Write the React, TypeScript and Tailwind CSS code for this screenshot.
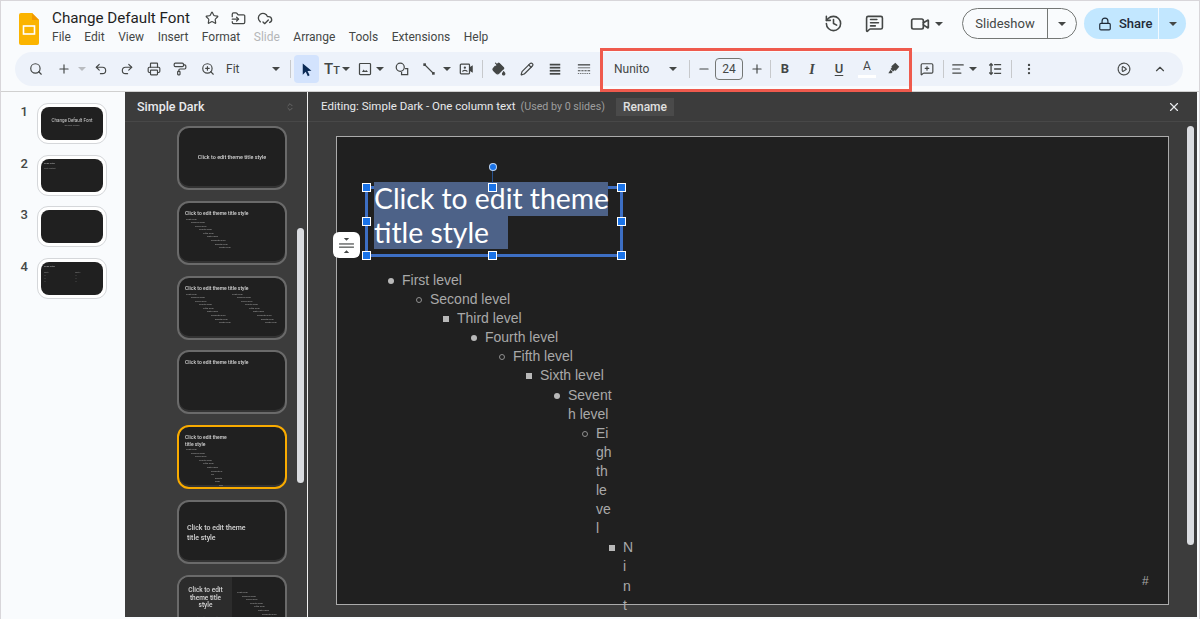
import React from 'react';
import {
  Search, Plus, Undo2, Redo2, Printer, PaintRoller, ZoomIn, PaintBucket, Pencil,
  Star, FolderInput, CloudCheck, History, MessageSquareText, Video, Lock, X, Minus,
  EllipsisVertical, ChevronUp, AlignLeft, MessageSquarePlus, CirclePlay, ChevronsUpDown,
} from 'lucide-react';

const sans = 'font-["Roboto",sans-serif]';

function Caret({ className = '' }: { className?: string }) {
  return <span className={`block w-0 h-0 border-x-[4px] border-x-transparent border-t-[4px] border-t-[#444746] ${className}`} />;
}

function Divider({ className = '' }: { className?: string }) {
  return <span className={`block w-px h-[18px] bg-[#c7c9cc] ${className}`} />;
}

const menus = ['File', 'Edit', 'View', 'Insert', 'Format', 'Slide', 'Arrange', 'Tools', 'Extensions', 'Help'];

function Header() {
  return (
    <div className="relative h-[90px] shrink-0 bg-[#f9fbfd]">
      <div className="flex items-start h-[47px]">
        <svg viewBox="0 0 20 32" className="w-[20px] h-[32px] ml-[18px] mt-[12px] shrink-0">
          <path d="M2 0h11l7 7v23a2 2 0 0 1-2 2H2a2 2 0 0 1-2-2V2a2 2 0 0 1 2-2z" fill="#fbb400" />
          <path d="M13 0l7 7h-7z" fill="#f29900" />
          <rect x="4.5" y="13" width="11" height="8" fill="none" stroke="#fff" strokeWidth="1.6" />
        </svg>
        <div className="ml-[13px] mt-[7px]">
          <div className="flex items-center h-[20px]">
            <span className="text-[15.200px] leading-[20px] text-[#1f1f1f] w-[149px] whitespace-nowrap">Change Default Font</span>
            <Star className="w-[14px] h-[14px] ml-[4px] text-[#444746]" />
            <FolderInput className="w-[15px] h-[15px] ml-[12px] text-[#444746]" />
            <CloudCheck className="w-[16px] h-[16px] ml-[11px] text-[#444746]" />
          </div>
          <div className="flex gap-[13.500px] mt-[1px] text-[12px] leading-[16px] text-[#444746]">
            {menus.map((m) => (
              <span key={m} className={m === 'Slide' ? 'text-[#b4b6b8]' : ''}>{m}</span>
            ))}
          </div>
        </div>
        <div className="ml-auto flex items-center mt-[7px] mr-[13px] h-[31px]">
          <History className="w-[19px] h-[19px] text-[#444746]" />
          <MessageSquareText className="w-[19px] h-[19px] ml-[22px] text-[#444746]" />
          <Video className="w-[20px] h-[20px] ml-[26px] text-[#444746]" />
          <Caret className="ml-[5px]" />
          <div className="flex items-center h-[31px] w-[115px] ml-[19px] border border-[#747775] rounded-full text-[13px] text-[#444746]">
            <span className="w-[84px] text-center">Slideshow</span>
            <span className="w-px h-full bg-[#747775]" />
            <Caret className="ml-[10px]" />
          </div>
          <div className="flex items-center h-[31px] w-[102px] ml-[7px] rounded-full bg-[#c2e7ff] text-[13px] font-medium text-[#1f2a37]">
            <Lock className="w-[14px] h-[14px] ml-[14px]" />
            <span className="ml-[7px] w-[32px]">Share</span>
            <span className="w-px h-full ml-[7px] bg-[#f2f9ff]" />
            <Caret className="ml-[10px] border-t-[#1f1f1f]" />
          </div>
        </div>
      </div>
      <Toolbar />
      <div className="absolute z-10 left-[599px] top-[47px] w-[312px] h-[44px] border-[3px] border-[#ef5a4d]" />
    </div>
  );
}

function Toolbar() {
  const ic = 'w-[16px] h-[16px] p-[1px] shrink-0 text-[#444746]';
  return (
    <div className="flex items-center h-[34px] mt-[4px] ml-[14px] mr-[16px] pr-[15px] rounded-full bg-[#edf2fa]">
      <Search className={`${ic} ml-[13px]`} />
      <Plus className={`${ic} ml-[12px]`} />
      <Caret className="ml-[6px] border-t-[#b9bcc0]" />
      <Undo2 className={`${ic} ml-[7px]`} />
      <Redo2 className={`${ic} ml-[10px]`} />
      <Printer className={`${ic} ml-[11px]`} />
      <PaintRoller className={`${ic} ml-[10px]`} />
      <ZoomIn className={`${ic} ml-[12px]`} />
      <span className="ml-[10px] w-[46px] text-[12px] text-[#444746]">Fit</span>
      <Caret />
      <Divider className="ml-[10px]" />
      <span className="ml-[3px] w-[25px] h-[28px] rounded-[4px] bg-[#d3e3fd] flex items-center justify-center shrink-0">
        <svg viewBox="0 0 16 16" className="w-[15px] h-[15px]"><path d="M4 1.5v12l3.2-3 2.2 4.6 1.9-.9-2.2-4.5 4.2-.3z" fill="#0b2a55" /></svg>
      </span>
      <span className="ml-[3px] w-[20px] text-center text-[#444746] font-medium leading-none">
        <span className="text-[15px]">T</span><span className="text-[11px]">T</span>
      </span>
      <Caret />
      <svg viewBox="0 0 16 16" className={`${ic} ml-[7px]`} fill="none" stroke="#444746" strokeWidth="1.400">
        <rect x="1.700" y="1.700" width="12.600" height="12.600" rx="1" />
        <path d="M4.500 11.500l2-2.800 1.500 1.800 1.300-1.500 2.200 2.500z" fill="#444746" stroke="none" />
      </svg>
      <Caret className="ml-[3px]" />
      <svg viewBox="0 0 16 16" className={`${ic} ml-[10px]`} fill="none" stroke="#444746" strokeWidth="1.400">
        <circle cx="6" cy="6" r="4.600" />
        <path d="M11.500 7.500h3v7h-7v-3" />
      </svg>
      <svg viewBox="0 0 16 16" className={`${ic} ml-[11px]`}>
        <path d="M3 3l10 10" stroke="#444746" strokeWidth="1.6" />
        <rect x="1.500" y="1.500" width="3" height="3" fill="#444746" />
        <rect x="11.500" y="11.500" width="3" height="3" fill="#444746" />
      </svg>
      <Caret className="ml-[6px]" />
      <svg viewBox="0 0 16 16" className={`${ic} ml-[7px]`} fill="none" stroke="#444746" strokeWidth="1.400">
        <rect x="1.500" y="2.500" width="10.500" height="11" rx="1" />
        <circle cx="6.700" cy="6.500" r="1.300" fill="#444746" stroke="none" />
        <path d="M4 11c.5-2 5-2 5.500 0" />
        <path d="M12 7l3-2v6l-3-2" fill="#444746" />
      </svg>
      <Divider className="ml-[8px]" />
      <PaintBucket className={`${ic} ml-[8px] fill-[#444746]`} />
      <Pencil className={`${ic} ml-[12px]`} />
      <svg viewBox="0 0 16 16" className={`${ic} ml-[12px]`} fill="#444746">
        <rect x="2" y="2" width="12" height="2" /><rect x="2" y="5.500" width="12" height="2" /><rect x="2" y="9" width="12" height="2" /><rect x="2" y="12.500" width="12" height="2" />
      </svg>
      <svg viewBox="0 0 16 16" className={`${ic} ml-[13px]`} fill="#444746">
        <rect x="1" y="2.500" width="14" height="1.500" />
        <rect x="1" y="6" width="14" height="1.200" opacity=".7" />
        <path d="M1 9.500h3v1H1zm4 0h2.500v1H5zm3.500 0H11v1H8.500zm3.500 0h3v1h-3zM1 12.500h1.500v1H1zm2.500 0H5v1H3.500zm2.500 0h1.500v1H6zm2.500 0H10v1H8.500zm2.500 0h1.500v1H11zm2.500 0H15v1h-1.500z" />
      </svg>
      <span className="ml-[22px] w-[50px] text-[12px] text-[#444746]">Nunito</span>
      <Caret className="ml-[5px]" />
      <Divider className="ml-[12px]" />
      <Minus className={`${ic} ml-[6px]`} />
      <span className="ml-[3px] w-[28px] h-[22px] shrink-0 rounded-[4px] border border-[#747775] text-center text-[12px] leading-[20px] text-[#444746]">24</span>
      <Plus className={`${ic} ml-[6px]`} />
      <Divider className="ml-[5px]" />
      <span className="ml-[6px] w-[16px] text-center text-[13px] font-bold text-[#444746]">B</span>
      <span className="ml-[11px] w-[16px] text-center text-[14px] font-bold italic font-['Liberation_Serif',serif] text-[#444746]">I</span>
      <span className="ml-[11px] w-[16px] text-center text-[13px] font-medium underline underline-offset-2 text-[#444746]">U</span>
      <span className="ml-[11px] w-[18px] h-[20px] flex flex-col items-center text-[12px] leading-[15px] text-[#444746]">
        A
        <span className="block w-[18px] h-[3px] mt-[1px] bg-white" />
      </span>
      <svg viewBox="0 0 16 16" className={`${ic} ml-[10px] mb-[3px]`} fill="#444746">
        <path d="M9.500 2l4.500 4.500-4 4.500-1.500-.5-1.500 1.500-3-3 1.500-1.500-.5-1.500z" />
        <path d="M4 10l2.500 2.500-1.500 1.500H1.500z" />
      </svg>
      <MessageSquarePlus className={`${ic} ml-[17px]`} />
      <Divider className="ml-[8px]" />
      <AlignLeft className={`${ic} ml-[6px]`} />
      <Caret className="ml-[3px]" />
      <svg viewBox="0 0 16 16" className={`${ic} ml-[10px]`} fill="none" stroke="#444746" strokeWidth="1.500">
        <path d="M7 3h8M7 8h8M7 13h8M3.500 2v12M1.500 4l2-2 2 2M1.500 12l2 2 2-2" />
      </svg>
      <Divider className="ml-[8px]" />
      <EllipsisVertical className={`${ic} ml-[9px]`} />
      <CirclePlay className={`${ic} ml-auto`} strokeDasharray="3 1.500" />
      <ChevronUp className={`${ic} ml-[20px]`} />
    </div>
  );
}

const miniRows = [
  { label: 'First level', pad: 'pl-[1px]' },
  { label: 'Second level', pad: 'pl-[6px]' },
  { label: 'Third level', pad: 'pl-[10px]' },
  { label: 'Fourth level', pad: 'pl-[14px]' },
  { label: 'Fifth level', pad: 'pl-[18px]' },
  { label: 'Sixth level', pad: 'pl-[22px]' },
  { label: 'Seventh level', pad: 'pl-[26px]' },
  { label: 'Eighth level', pad: 'pl-[30px]' },
  { label: 'Ninth level', pad: 'pl-[34px]' },
];

function MiniList({ className = '' }: { className?: string }) {
  return (
    <div className={`text-[2.500px] leading-[3.600px] text-[#a6a6a6] ${className}`}>
      {miniRows.map((r) => (
        <div key={r.label} className={r.pad}>{r.label}</div>
      ))}
    </div>
  );
}

function FilmThumb({ n, children }: { n: number; children?: React.ReactNode }) {
  return (
    <div className="flex items-start h-[41px]">
      <span className={`${sans} w-[36px] pr-[9px] pt-[1px] text-right text-[13px] leading-[16px] font-medium text-[#444746]`}>{n}</span>
      <div className="w-[70px] h-[41px] rounded-[11px] border border-[#d5d7da] bg-white p-[3px]">
        <div className="w-full h-full rounded-[8px] bg-[#202020] overflow-hidden relative will-change-transform">{children}</div>
      </div>
    </div>
  );
}

function Filmstrip() {
  return (
    <div className="w-[124px] shrink-0 bg-[#f9fbfd] pt-[11px] flex flex-col gap-[10.500px]">
      <FilmThumb n={1}>
        <div className="pt-[11px] text-center text-[4.500px] leading-[6px] text-[#cfcfcf]">Change Default Font</div>
        <div className="text-center text-[2.500px] leading-[4px] text-[#8a8a8a]">Google Slides</div>
      </FilmThumb>
      <FilmThumb n={2}>
        <div className="pl-[3px] pt-[3px] text-[2.500px] leading-[4px] text-[#bdbdbd]">Slide Title</div>
        <div className="pl-[3px] pt-px text-[2px] leading-[3px] text-[#8a8a8a]">First Content</div>
      </FilmThumb>
      <FilmThumb n={3} />
      <FilmThumb n={4}>
        <div className="pl-[3px] pt-[3px] text-[2.500px] leading-[4px] text-[#bdbdbd]">Slide Title</div>
        <div className="flex pl-[3px] pt-[2px] text-[2px] leading-[3px] text-[#8a8a8a]">
          <div className="w-[31px]">Text 1<br />• •<br />• •<br />• •</div>
          <div>Text 2<br />• •<br />• •<br />• •</div>
        </div>
      </FilmThumb>
    </div>
  );
}

function ThemeThumb({ active, children }: { active?: boolean; children?: React.ReactNode }) {
  return (
    <div className={`w-[110px] h-[64px] shrink-0 rounded-[12px] bg-[#202020] overflow-hidden will-change-transform border-[2px] shadow-[inset_0_-2px_0_#333] ${active ? 'border-[#f9ab00]' : 'border-[#6a6a6a]'}`}>
      {children}
    </div>
  );
}

const thumbTitle = 'text-[5px] leading-[6.500px] font-medium text-[#d4d4d4]';

function ThemePanel() {
  return (
    <div className={`${sans} w-[182px] shrink-0 bg-[#3c3c3c] flex flex-col relative overflow-hidden`}>
      <div className="h-[30px] shrink-0 flex items-center justify-between pt-[1px] pl-[12px] pr-[12px] border-b border-[#484848]">
        <span className="text-[12.500px] font-medium text-[#e8eaed]">Simple Dark</span>
        <ChevronsUpDown className="w-[10px] h-[10px] text-[#6f6f6f]" />
      </div>
      <div className="pl-[52px] pt-[4px] flex flex-col gap-[10.800px]">
        <ThemeThumb>
          <div className="text-[5.400px] leading-[7px] font-medium text-[#d4d4d4] text-center pt-[26px]">Click to edit theme title style</div>
        </ThemeThumb>
        <ThemeThumb>
          <div className={`${thumbTitle} pl-[6px] pt-[7px]`}>Click to edit theme title style</div>
          <MiniList className="pl-[6px] pt-[1px]" />
        </ThemeThumb>
        <ThemeThumb>
          <div className={`${thumbTitle} pl-[6px] pt-[7px]`}>Click to edit theme title style</div>
          <div className="flex pt-[1px]">
            <MiniList className="pl-[6px] w-[52px]" />
            <MiniList />
          </div>
        </ThemeThumb>
        <ThemeThumb>
          <div className={`${thumbTitle} pl-[6px] pt-[7px]`}>Click to edit theme title style</div>
        </ThemeThumb>
        <ThemeThumb active>
          <div className={`${thumbTitle} pl-[6px] pt-[7px]`}>Click to edit theme<br />title style</div>
          <MiniList className="ml-[6px] pt-[1px] w-[38px] break-all" />
        </ThemeThumb>
        <ThemeThumb>
          <div className="pl-[8px] pt-[21px] text-[7px] leading-[10px] font-medium text-[#d4d4d4]">Click to edit theme<br />title style</div>
        </ThemeThumb>
        <ThemeThumb>
          <div className="flex h-full">
            <div className="w-[53px] h-full bg-[#2c2c2c] text-center pt-[10px] px-[8px]">
              <div className="text-[6.500px] leading-[7.500px] font-medium text-[#d4d4d4]">Click to edit theme title style</div>
              <div className="pt-[6px] text-[2.500px] whitespace-nowrap text-[#8a8a8a]">Click to edit theme subtitle</div>
            </div>
            <MiniList className="pl-[4px] pt-[14px]" />
          </div>
        </ThemeThumb>
      </div>
      <div className="absolute left-[172px] top-[136px] w-[7px] h-[255px] rounded-full bg-[#dadce0]" />
    </div>
  );
}

function Handle({ className }: { className: string }) {
  return <span className={`absolute w-[9px] h-[9px] bg-[#1a73e8] border border-white ${className}`} />;
}

type Level = { label: string; bullet: 'disc' | 'ring' | 'square'; pad: string; width: string };

const levels: Level[] = [
  { label: 'First level', bullet: 'disc', pad: 'ml-[65px]', width: 'w-[160px]' },
  { label: 'Second level', bullet: 'ring', pad: 'ml-[93px]', width: 'w-[160px]' },
  { label: 'Third level', bullet: 'square', pad: 'ml-[120px]', width: 'w-[120px]' },
  { label: 'Fourth level', bullet: 'disc', pad: 'ml-[148px]', width: 'w-[100px]' },
  { label: 'Fifth level', bullet: 'ring', pad: 'ml-[176px]', width: 'w-[80px]' },
  { label: 'Sixth level', bullet: 'square', pad: 'ml-[203px]', width: 'w-[70px]' },
  { label: 'Seventh level', bullet: 'disc', pad: 'ml-[231px]', width: 'w-[44px]' },
  { label: 'Eighth level', bullet: 'ring', pad: 'ml-[259px]', width: 'w-[16px]' },
  { label: 'Ninth level', bullet: 'square', pad: 'ml-[286px]', width: 'w-[10px]' },
];

function Bullet({ kind }: { kind: Level['bullet'] }) {
  if (kind === 'disc') return <span className="absolute -left-[14px] top-[7px] w-[6px] h-[6px] rounded-full bg-[#b8b8b8]" />;
  if (kind === 'ring') return <span className="absolute -left-[14px] top-[7px] w-[6px] h-[6px] rounded-full border border-[#8f8f8f]" />;
  return <span className="absolute -left-[14px] top-[7px] w-[6px] h-[6px] bg-[#b8b8b8]" />;
}

function Slide() {
  return (
    <div className="relative w-[833px] h-[469px] shrink-0 bg-[#202020] border border-[#ababab]">
      {/* selected title box */}
      <div className="absolute left-[28px] top-[49px] w-[258px] h-[71px] border-[3px] border-[#3d6fc4]">
        <div className="absolute left-[6px] top-[-7px] text-[28.300px] leading-[33.500px] text-white font-['Lato',sans-serif]">
          <div className="w-[234px] bg-[#4d6288] whitespace-nowrap">Click to edit theme</div>
          <div className="w-[134px] bg-[#4d6288] whitespace-nowrap">title style</div>
        </div>
        <Handle className="-left-[6px] -top-[6px]" />
        <Handle className="left-[120px] -top-[6px]" />
        <Handle className="-right-[6px] -top-[6px]" />
        <Handle className="-left-[6px] top-[28px]" />
        <Handle className="-right-[6px] top-[28px]" />
        <Handle className="-left-[6px] -bottom-[6px]" />
        <Handle className="left-[120px] -bottom-[6px]" />
        <Handle className="-right-[6px] -bottom-[6px]" />
        <span className="absolute left-[124px] -top-[18px] w-px h-[12px] bg-[#28528f]" />
        <span className="absolute left-[120.500px] -top-[26px] w-[8px] h-[8px] rounded-full bg-[#1a73e8] border border-white/70" />
      </div>
      <div className="absolute -left-[4px] top-[95px] w-[27px] h-[26px] rounded-[6px] bg-white flex items-center justify-center">
        <svg viewBox="0 0 16 16" className="w-[17px] h-[17px]" fill="#444746">
          <path d="M5.500 1h5L8 3.500zM5.500 15h5L8 12.500z" />
          <rect x="1" y="6" width="14" height="1.100" />
          <rect x="1" y="9" width="14" height="1.100" />
        </svg>
      </div>
      {/* body placeholder */}
      <div className="absolute left-0 top-[134px] w-full font-['Liberation_Sans',sans-serif] text-[14px] leading-[19.100px] text-[#a9a9a9]">
        {levels.map((l) => (
          <div key={l.label} className={`relative break-all ${l.pad} ${l.width}`}>
            <Bullet kind={l.bullet} />
            {l.label}
          </div>
        ))}
      </div>
      <span className="absolute left-[805px] top-[435px] font-['Liberation_Sans',sans-serif] text-[12px] text-[#a9a9a9]">#</span>
    </div>
  );
}

function Editor() {
  return (
    <div className={`${sans} flex-1 bg-[#3c3c3c] relative overflow-hidden flex flex-col`}>
      <div className="h-[30px] shrink-0 flex items-center pt-[1px] pl-[13px] pr-[16px] border-b border-[#484848]">
        <span className="text-[11.500px] text-[#e8eaed]">Editing: Simple Dark - One column text</span>
        <span className="ml-[5px] text-[10.700px] text-[#9e9e9e]">(Used by 0 slides)</span>
        <span className="ml-[11px] w-[58px] h-[18px] bg-[#4a4a4a] text-center text-[12px] font-medium leading-[18px] text-[#e0e0e0]">Rename</span>
        <X className="ml-auto w-[14px] h-[14px] text-[#e8eaed]" />
      </div>
      <div className="pl-[28px] pt-[14px]">
        <Slide />
      </div>
      <div className="absolute left-[879px] top-[34px] w-[7px] h-[419px] rounded-full bg-[#dadce0]" />
    </div>
  );
}

export default function App() {
  return (
    <div className={`${sans} w-[1200px] h-[619px] flex flex-col overflow-hidden border-x border-t border-[#d8d6da] bg-[#f9fbfd]`}>
      <Header />
      <div className="flex h-[526px] shrink-0 border-t border-[#d0d0d0] overflow-hidden">
        <Filmstrip />
        <ThemePanel />
        <span className="w-px shrink-0 bg-[#f0f0f0]" />
        <Editor />
        <span className="w-[2px] shrink-0 bg-[#f9fbfd]" />
      </div>
    </div>
  );
}
